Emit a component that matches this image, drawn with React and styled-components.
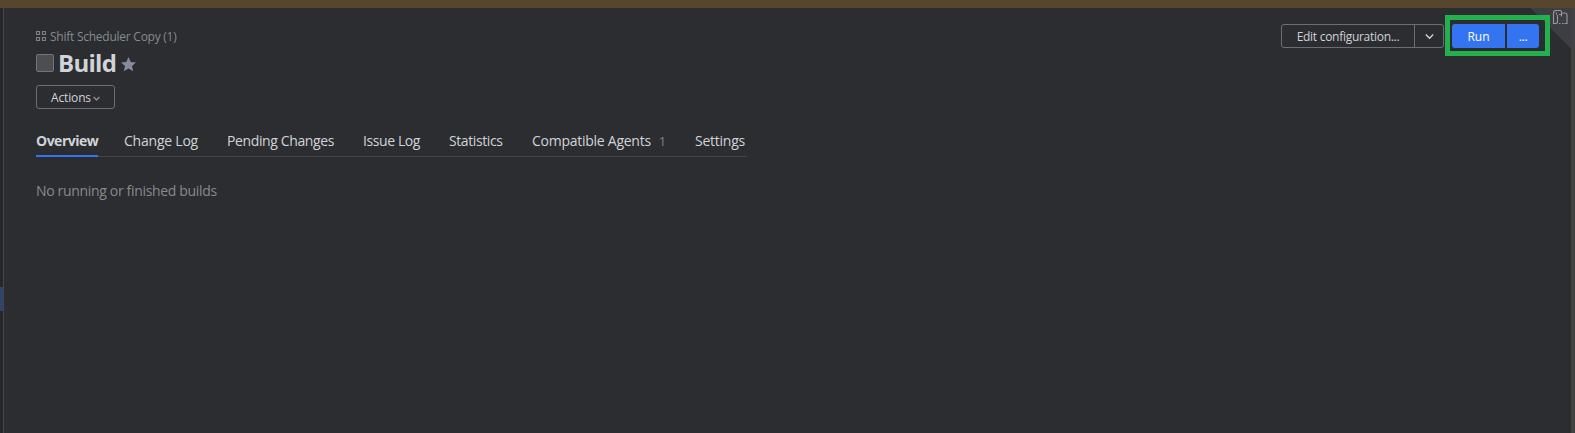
import React from 'react';
import styled, { createGlobalStyle } from 'styled-components';

const Global = createGlobalStyle`
  * { box-sizing: border-box; }
  body { margin: 0; background: #2b2d30; overflow: hidden; }
  button { font-family: inherit; margin: 0; padding: 0; }
`;
const Page = styled.div`
  height: 433px; display: flex; flex-direction: column; background: #2b2d30;
  font-family: "Open Sans", "Noto Sans", sans-serif; color: #d1d3d9;
`;
const TopBar = styled.div`height: 8px; flex: none; background: #57462e;`;
const Body = styled.div`display: flex; flex: 1; min-height: 0;`;
const Sidebar = styled.aside`width: 4px; border-right: 1px solid #43454a; background: #26272b; padding-top: 279px;`;
const SidebarMark = styled.div`height: 24px; background: #2e436e;`;
const Scrollbar = styled.div`width: 4px; background: #424242;`;
const Main = styled.main`flex: 1; display: flex; justify-content: space-between; position: relative; padding-left: 32px;`;
const Content = styled.section`width: 711px; padding-top: 18px;`;
const Label = styled.span`
  display: inline-block; white-space: nowrap;
  font-size: ${p => p.$size || 13}px; letter-spacing: ${p => p.$track || 0}px;
`;
const Crumb = styled.div`display: flex; align-items: center; gap: 4px; height: 20px; color: #868a91; svg { margin-top: -1px; }`;
const TitleRow = styled.div`display: flex; align-items: center; height: 33px; padding-top: 1px; svg { margin-top: 2px; }`;
const Check = styled.span`width: 18px; height: 18px; border: 1px solid #6f7387; border-radius: 2px; background: #4e4e4e; margin-right: 4px;`;
const Title = styled.h1`margin: 0 4px 0 0; width: 59px; font-weight: 700; line-height: 32px; font-size: 24px;`;
const Outline = styled.button`
  display: flex; align-items: center; justify-content: center; height: 24px; width: ${p => p.$w}px;
  border: 1px solid #6b6e75; border-radius: ${p => p.$radius || '3px'}; background: transparent; color: #d1d3d9;
  margin-left: ${p => p.$joined ? -1 : 0}px;
`;
const ActionsWrap = styled.div`padding-top: 6px; svg { margin: 2px 0 0 2px; color: #989ba2; }`;
const Tabs = styled.nav`display: flex; margin-top: 18px; height: 30px; border-bottom: 1px solid #43454a;`;
const Tab = styled.a`
  width: ${p => p.$w}px; margin-right: ${p => p.$gap}px; height: 30px; line-height: 27px; flex: none; white-space: nowrap;
  font-weight: ${p => p.$active ? 700 : 400}; border-bottom: 2px solid ${p => p.$active ? '#3574f0' : 'transparent'};
`;
const Count = styled.span`color: #7d8188; margin-left: 8px; font-size: 13px;`;
const Empty = styled.p`margin: 23px 0 0; line-height: 20px; color: #868a91;`;
const Controls = styled.div`display: flex; align-items: flex-start; padding-top: 7px; margin-right: 21px; position: relative; z-index: 1;`;
const Split = styled.div`display: flex; padding-top: 9px; margin-right: 1px;`;
const Highlight = styled.div`display: flex; gap: 2px; width: 105px; height: 41px; border: 5px solid #22b14c; padding: 4px 2px 0;`;
const Primary = styled.button`
  width: ${p => p.$w}px; height: 24px; border: 0; background: #3574f0; color: #fff; border-radius: ${p => p.$radius};
`;
const Corner = styled.div`
  position: absolute; top: 0; right: 0; width: 40px; height: 40px;
  background: linear-gradient(45deg, transparent 50%, #3c3e44 50%);
  svg { position: absolute; left: 21px; top: 2px; }
`;

const tabs = [
  { text: 'Overview', w: 62, gap: 26, active: true, track: -0.5 },
  { text: 'Change Log', w: 76, gap: 27, track: -0.22 },
  { text: 'Pending Changes', w: 109, gap: 27, track: -0.38 },
  { text: 'Issue Log', w: 58, gap: 28, track: -0.4 },
  { text: 'Statistics', w: 55, gap: 28, track: -0.4 },
  { text: 'Compatible Agents', w: 134, gap: 29, count: 1, track: -0.26 },
  { text: 'Settings', w: 50, gap: 0, track: -0.25 },
];

const Chevron = ({ size = 8, weight = 1.2 }) => (
  <svg width={size} height={size} viewBox="0 0 8 8" fill="none" stroke="currentColor" strokeWidth={weight}><path d="M.7 2.3 4 5.6l3.3-3.3" /></svg>
);

export default function App() {
  return (
    <Page>
      <Global />
      <TopBar />
      <Body>
        <Sidebar><SidebarMark /></Sidebar>
        <Main>
          <Content>
            <Crumb>
              <svg width="10" height="10" fill="none" stroke="#7c8087" strokeWidth="1.2"><path d="M.5.5h3v3h-3zM6.5.5h3v3h-3zM.5 6.5h3v3h-3zM6.5 6.5h3v3h-3z" /></svg>
              <Label $size={12} $track={-0.25}>Shift Scheduler Copy (1)</Label>
            </Crumb>
            <TitleRow>
              <Check />
              <Title><Label $size={24} $track={-0.7}>Build</Label></Title>
              <svg width="15" height="15" viewBox="0 0 15 15" fill="#858ba0"><path d="m7.500 0 2.200 4.900 5.300.5-4 3.500 1.200 5.300-4.700-2.800-4.700 2.800 1.200-5.300-4-3.500 5.300-.5z" /></svg>
            </TitleRow>
            <ActionsWrap><Outline $w={79}><Label $size={12} $track={-0.15}>Actions</Label><Chevron size={7} weight={1.3} /></Outline></ActionsWrap>
            <Tabs>
              {tabs.map(t => (
                <Tab key={t.text} $w={t.w} $gap={t.gap} $active={t.active}>
                  <Label $size={14} $track={t.track}>{t.text}</Label>{t.count && <Count>{t.count}</Count>}
                </Tab>
              ))}
            </Tabs>
            <Empty><Label $size={14} $track={-0.33}>No running or finished builds</Label></Empty>
          </Content>
          <Controls>
            <Split>
              <Outline $w={134} $radius="3px 0 0 3px"><Label $size={12} $track={-0.28}>Edit configuration...</Label></Outline>
              <Outline $w={30} $radius="0 3px 3px 0" $joined><Chevron size={9} /></Outline>
            </Split>
            <Highlight>
              <Primary $w={53} $radius="3px 0 0 3px"><Label $size={12}>Run</Label></Primary>
              <Primary $w={32} $radius="0 3px 3px 0"><Label $size={12} $track={-0.3}>...</Label></Primary>
            </Highlight>
          </Controls>
          <Corner>
            <svg width="16" height="15" fill="none" stroke="#96989e" strokeWidth="1.1"><path d="M5.500 5v6.500c0 1.300-.7 2-2 2h-2V3.500c0-2 1-3 3-3h3.500c1 0 1.500.5 1.500 1.500v2.500H7M4.500 2.500v2M9.500 3h3.500c1.200 0 2 .7 2 2v8.500h-2.500M7 13.500h1.500M10 13.500h1.500M9.500 4.500v2" /></svg>
          </Corner>
        </Main>
        <Scrollbar />
      </Body>
    </Page>
  );
}
